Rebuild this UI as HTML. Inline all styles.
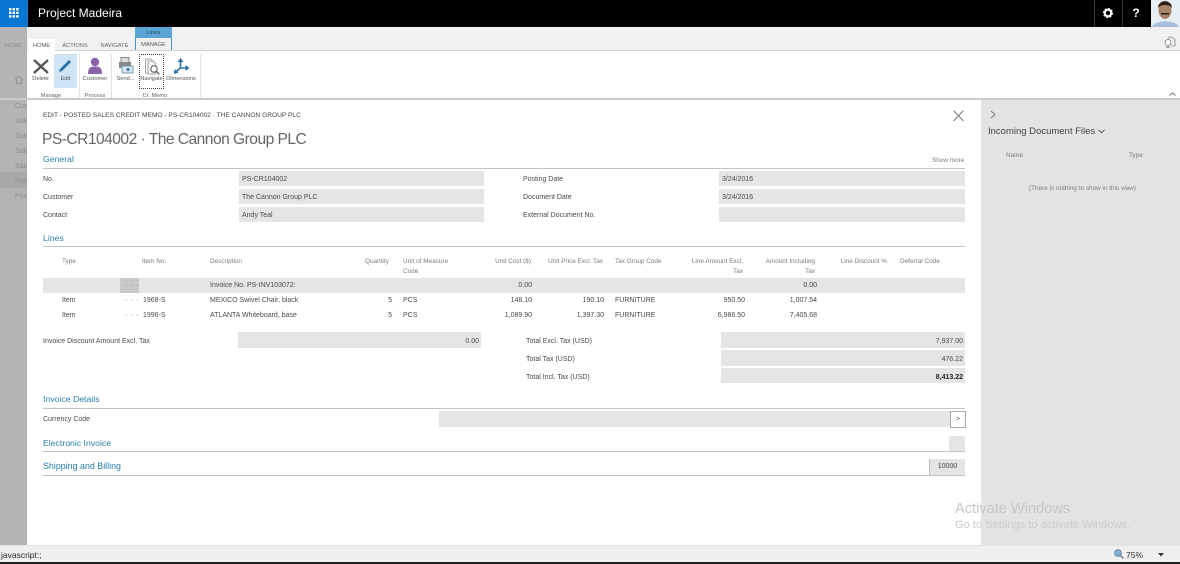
<!DOCTYPE html>
<html><head><meta charset="utf-8"><style>
html,body{margin:0;padding:0;width:1180px;height:564px;overflow:hidden;background:#fff}
body{position:relative;font-family:"Liberation Sans",sans-serif;font-size:7px;color:#4a4a4a}
.a,.t,.r,.b{position:absolute}
.t,.r{white-space:nowrap;line-height:10px}
.r{text-align:right}
.h{color:#7c7c7c;font-size:6.4px}
.f{background:#e5e5e5}
.s{color:#2a7fa8;font-size:8.7px;line-height:12px}
.l{background:#c4c4c4;height:1px;left:43px;width:922px}
.rb{font-size:5.7px;color:#555;text-align:center;position:absolute;line-height:8px;white-space:nowrap}
.d{letter-spacing:.6px;color:#555}
.g{color:#8e8e8e;width:12px;overflow:hidden}
svg{position:absolute;overflow:visible}
</style></head><body>
<!-- left backdrop -->
<div class="a" style="left:0;top:27px;width:27px;height:518px;background:#b4b4b4"></div>
<div class="a" style="left:0;top:172px;width:27px;height:16px;background:#a8a8a8"></div>
<!-- top bar -->
<div class="a" style="left:0;top:0;width:1180px;height:27px;background:#000"></div>
<div class="a" style="left:0;top:0;width:28px;height:27px;background:#0a78d2"></div>
<svg style="left:9px;top:8px" width="10" height="10"><g fill="#fff"><rect x="0" y="0" width="2.4" height="2.4"/><rect x="3.6" y="0" width="2.4" height="2.4"/><rect x="7.2" y="0" width="2.4" height="2.4"/><rect x="0" y="3.6" width="2.4" height="2.4"/><rect x="3.6" y="3.6" width="2.4" height="2.4"/><rect x="7.2" y="3.6" width="2.4" height="2.4"/><rect x="0" y="7.2" width="2.4" height="2.4"/><rect x="3.6" y="7.2" width="2.4" height="2.4"/><rect x="7.2" y="7.2" width="2.4" height="2.4"/></g></svg>
<div class="t" style="left:38px;top:6px;font-size:12px;line-height:15px;color:#fff">Project Madeira</div>
<div class="a" style="left:1094px;top:0;width:1px;height:27px;background:#333"></div>
<div class="a" style="left:1122px;top:0;width:1px;height:27px;background:#333"></div>
<svg style="left:1103px;top:8px" width="10" height="10"><circle cx="5" cy="5" r="3.3" fill="none" stroke="#fff" stroke-width="2.2"/><circle cx="5" cy="5" r="4.4" fill="none" stroke="#fff" stroke-width="1.4" stroke-dasharray="1.7 1.75"/></svg>
<div class="t" style="left:1131px;top:6px;font-size:12px;line-height:14px;font-weight:bold;color:#fff;width:10px;text-align:center">?</div>
<svg style="left:1151px;top:0" width="29" height="27"><rect width="29" height="27" fill="#e8eff4"/><path d="M1 27 C3 22 9 22 14 21 C19 22 26 22 28 27Z" fill="#a8c0dc"/><ellipse cx="14" cy="10" rx="6.5" ry="9" fill="#a98468"/><path d="M7 8 C7 -1 21 -1 21 8 C19 4 9 4 7 8Z" fill="#2a2018"/><rect x="10" y="13" width="8" height="1.5" fill="#2d2019"/></svg>
<!-- ribbon -->
<div class="a" style="left:27px;top:27px;width:1153px;height:24px;background:#f1f1f1"></div>
<div class="a" style="left:27px;top:50px;width:1153px;height:1px;background:#d4d4d4"></div>
<div class="a" style="left:27px;top:51px;width:1153px;height:47px;background:#fff"></div>
<div class="a" style="left:0;top:98px;width:1180px;height:2px;background:#cbcbcb"></div>
<div class="a" style="left:28px;top:39px;width:27px;height:12px;background:#fff"></div>
<div class="a" style="left:135px;top:27px;width:37px;height:11px;background:#5aa5d5"></div>
<div class="a" style="left:135px;top:38px;width:35px;height:12px;background:#f1f1f1;border-left:1px solid #4a90bc;border-right:1px solid #4a90bc"></div>
<div class="rb" style="left:135px;top:29px;width:37px;color:#2f4a5a">Lines</div>
<div class="rb" style="left:0;top:42px;width:27px;color:#8e8e8e">HOME</div>
<div class="rb" style="left:28px;top:42px;width:27px">HOME</div>
<div class="rb" style="left:60px;top:42px;width:30px;color:#666">ACTIONS</div>
<div class="rb" style="left:98px;top:42px;width:33px;color:#666">NAVIGATE</div>
<div class="rb" style="left:135px;top:41px;width:37px">MANAGE</div>
<div class="a" style="left:54px;top:54px;width:23px;height:34px;background:#cfe5f5"></div>
<svg style="left:33px;top:59px" width="16" height="16"><path d="M1 1 L15 14 M15 1 L1 14" stroke="#555" stroke-width="2.4" fill="none"/></svg>
<svg style="left:58px;top:59px" width="14" height="14"><path d="M1 13 L2 10 L11 1 L13 3 L4 12Z" fill="#2a6fa8"/></svg>
<svg style="left:87px;top:57px" width="16" height="17"><circle cx="8" cy="5" r="4.2" fill="#8b63ab"/><path d="M1 17 C1 10 4 9.5 8 9.5 C12 9.5 15 10 15 17Z" fill="#8b63ab"/></svg>
<svg style="left:117px;top:57px" width="16" height="16"><rect x="4" y="0.5" width="8" height="5" fill="#ddd" stroke="#888"/><rect x="2" y="5" width="12" height="6" fill="#888"/><rect x="5" y="9" width="11" height="7" fill="#d6e6f2" stroke="#5f8bab" stroke-width=".8"/><circle cx="11" cy="12.5" r="1.6" fill="#3f7fae"/></svg>
<div class="a" style="left:139px;top:54px;width:23px;height:33px;border:1px dotted #444"></div>
<svg style="left:144px;top:58px" width="16" height="17"><path d="M1.5 1 H7 L10 4 V15 H1.5Z" fill="#f4f4f4" stroke="#aaa"/><path d="M4 3 H9 L12 6 V16 H4Z" fill="#f4f4f4" stroke="#aaa"/><circle cx="10" cy="11" r="3.2" fill="#fff" stroke="#555"/><path d="M12.3 13.3 L15.5 16.5" stroke="#555" stroke-width="1.2"/></svg>
<svg style="left:174px;top:58px" width="16" height="16"><path d="M6.5 2 V10 L1.5 14 M6.5 10 H14" fill="none" stroke="#2a6fa8" stroke-width="1.6"/><path d="M6.5 0 L9.5 4 H3.5Z M15.5 10 L11.5 7 V13Z M0 16 L0.5 11 L4.5 14.5Z" fill="#2a6fa8"/></svg>
<div class="rb" style="left:28px;top:75px;width:25px">Delete</div>
<div class="rb" style="left:54px;top:75px;width:23px">Edit</div>
<div class="rb" style="left:80px;top:75px;width:30px">Customer</div>
<div class="rb" style="left:113px;top:75px;width:25px">Send...</div>
<div class="rb" style="left:139px;top:75px;width:25px">Navigate</div>
<div class="rb" style="left:165px;top:75px;width:32px">Dimensions</div>
<div class="rb" style="left:30px;top:92px;width:42px;color:#666">Manage</div>
<div class="rb" style="left:80px;top:92px;width:30px;color:#666">Process</div>
<div class="rb" style="left:135px;top:92px;width:40px;color:#666">Cr. Memo</div>
<div class="a" style="left:79px;top:54px;width:1px;height:44px;background:#e4e4e4"></div>
<div class="a" style="left:111px;top:54px;width:1px;height:44px;background:#e4e4e4"></div>
<div class="a" style="left:200px;top:54px;width:1px;height:44px;background:#e4e4e4"></div>
<svg style="left:1164px;top:36px" width="12" height="12"><path d="M5 3 V1 H8 L11 3.5 V10 H7" fill="none" stroke="#888" stroke-width=".8"/><circle cx="4" cy="6.5" r="3" fill="#fff" stroke="#777" stroke-width=".8"/><path d="M3 10 V11.5 H5 V10" fill="none" stroke="#777" stroke-width=".8"/></svg>
<svg style="left:1169px;top:92px" width="7" height="4"><path d="M.5 3.5 L3.5 .8 L6.5 3.5" fill="none" stroke="#777"/></svg>
<svg style="left:14px;top:75px" width="10" height="9"><path d="M1 4.5 L5 1 L9 4.5 M2.5 4 V8.5 H7.5 V4" fill="none" stroke="#8a8a8a" stroke-width=".8"/></svg>
<div class="t g" style="left:15px;top:102px">Cust</div>
<div class="t g" style="left:15px;top:117px">Sales</div>
<div class="t g" style="left:15px;top:132px">Sales</div>
<div class="t g" style="left:15px;top:147px">Sales</div>
<div class="t g" style="left:15px;top:162px">Sales</div>
<div class="t g" style="left:15px;top:177px">Post</div>
<div class="t g" style="left:15px;top:192px">Post</div>
<!-- right panel -->
<div class="a" style="left:981px;top:100px;width:199px;height:445px;background:#e3e3e3"></div>
<svg style="left:990px;top:110px" width="6" height="9"><path d="M1 1 L5 4.5 L1 8" fill="none" stroke="#777"/></svg>
<div class="t" style="left:988px;top:126px;font-size:9.5px;line-height:12px;color:#444">Incoming Document Files</div>
<svg style="left:1098px;top:129px" width="7" height="5"><path d="M.5 .8 L3.5 3.8 L6.5 .8" fill="none" stroke="#555"/></svg>
<div class="t h" style="left:1006px;top:151px">Name</div>
<div class="t h" style="left:1129px;top:151px">Type</div>
<div class="t h" style="left:1029px;top:184px">(There is nothing to show in this view)</div>
<!-- header -->
<div class="t" style="left:43px;top:111px;font-size:6.6px;color:#444">EDIT - POSTED SALES CREDIT MEMO - PS-CR104002 · THE CANNON GROUP PLC</div>
<div class="t" style="left:42px;top:130px;font-size:15.6px;line-height:20px;letter-spacing:-.53px;color:#666">PS-CR104002 · The Cannon Group PLC</div>
<svg style="left:953px;top:110px" width="11" height="12"><path d="M.5 .5 L10.5 11 M10.5 .5 L.5 11" stroke="#777" fill="none"/></svg>
<div class="t s" style="left:43px;top:153px">General</div>
<div class="t h" style="left:932px;top:156px">Show more</div>
<div class="a l" style="top:168px"></div>
<div class="t" style="left:43px;top:175px">No.</div>
<div class="t" style="left:43px;top:193px">Customer</div>
<div class="t" style="left:43px;top:211px">Contact</div>
<div class="a f" style="left:239px;top:171px;width:245px;height:15px"></div>
<div class="a f" style="left:239px;top:189px;width:245px;height:15px"></div>
<div class="a f" style="left:239px;top:207px;width:245px;height:15px"></div>
<div class="t" style="left:242px;top:175px">PS-CR104002</div>
<div class="t" style="left:242px;top:193px">The Cannon Group PLC</div>
<div class="t" style="left:242px;top:211px">Andy Teal</div>
<div class="t" style="left:523px;top:175px">Posting Date</div>
<div class="t" style="left:523px;top:193px">Document Date</div>
<div class="t" style="left:523px;top:211px">External Document No.</div>
<div class="a f" style="left:719px;top:171px;width:246px;height:15px"></div>
<div class="a f" style="left:719px;top:189px;width:246px;height:15px"></div>
<div class="a f" style="left:719px;top:207px;width:246px;height:15px"></div>
<div class="t" style="left:722px;top:175px">3/24/2016</div>
<div class="t" style="left:722px;top:193px">3/24/2016</div>
<!-- lines -->
<div class="t s" style="left:43px;top:232px">Lines</div>
<div class="a l" style="top:246px"></div>
<div class="t h" style="left:62px;top:257px">Type</div>
<div class="t h" style="left:142px;top:257px">Item No.</div>
<div class="t h" style="left:210px;top:257px">Description</div>
<div class="t h" style="left:365px;top:257px">Quantity</div>
<div class="t h" style="left:403px;top:257px">Unit of Measure<br>Code</div>
<div class="r h" style="right:649px;top:257px">Unit Cost ($)</div>
<div class="r h" style="right:577px;top:257px">Unit Price Excl. Tax</div>
<div class="t h" style="left:615px;top:257px">Tax Group Code</div>
<div class="r h" style="right:437px;top:257px">Line Amount Excl.<br>Tax</div>
<div class="r h" style="right:365px;top:257px">Amount Including<br>Tax</div>
<div class="r h" style="right:293px;top:257px">Line Discount %</div>
<div class="t h" style="left:900px;top:257px">Deferral Code</div>
<div class="a f" style="left:43px;top:278px;width:922px;height:15px"></div>
<div class="a" style="left:120px;top:278px;width:19px;height:15px;background:#c9c9c9"></div>
<div class="t d" style="left:125px;top:281px">· · ·</div>
<div class="t" style="left:210px;top:281px">Invoice No. PS-INV103072:</div>
<div class="r" style="right:648px;top:281px">0.00</div>
<div class="r" style="right:363px;top:281px">0.00</div>
<div class="t" style="left:62px;top:296px">Item</div>
<div class="t d" style="left:125px;top:296px">· · ·</div>
<div class="t" style="left:143px;top:296px">1968-S</div>
<div class="t" style="left:210px;top:296px">MEXICO Swivel Chair, black</div>
<div class="r" style="right:788px;top:296px">5</div>
<div class="t" style="left:403px;top:296px">PCS</div>
<div class="r" style="right:648px;top:296px">148.10</div>
<div class="r" style="right:576px;top:296px">190.10</div>
<div class="t" style="left:615px;top:296px">FURNITURE</div>
<div class="r" style="right:435px;top:296px">950.50</div>
<div class="r" style="right:363px;top:296px">1,007.54</div>
<div class="t" style="left:62px;top:311px">Item</div>
<div class="t d" style="left:125px;top:311px">· · ·</div>
<div class="t" style="left:143px;top:311px">1996-S</div>
<div class="t" style="left:210px;top:311px">ATLANTA Whiteboard, base</div>
<div class="r" style="right:788px;top:311px">5</div>
<div class="t" style="left:403px;top:311px">PCS</div>
<div class="r" style="right:648px;top:311px">1,089.90</div>
<div class="r" style="right:576px;top:311px">1,397.30</div>
<div class="t" style="left:615px;top:311px">FURNITURE</div>
<div class="r" style="right:435px;top:311px">6,986.50</div>
<div class="r" style="right:363px;top:311px">7,405.68</div>
<!-- totals -->
<div class="t" style="left:43px;top:337px">Invoice Discount Amount Excl. Tax</div>
<div class="a f" style="left:238px;top:332px;width:243px;height:16px"></div>
<div class="r" style="right:701px;top:337px">0.00</div>
<div class="t" style="left:526px;top:337px">Total Excl. Tax (USD)</div>
<div class="t" style="left:526px;top:355px">Total Tax (USD)</div>
<div class="t" style="left:526px;top:373px">Total Incl. Tax (USD)</div>
<div class="a f" style="left:721px;top:332px;width:244px;height:16px"></div>
<div class="a f" style="left:721px;top:350px;width:244px;height:16px"></div>
<div class="a f" style="left:721px;top:368px;width:244px;height:15px"></div>
<div class="r" style="right:217px;top:337px">7,937.00</div>
<div class="r" style="right:217px;top:355px">476.22</div>
<div class="r" style="right:217px;top:373px;font-weight:bold;color:#222">8,413.22</div>
<!-- sections -->
<div class="t s" style="left:43px;top:393px">Invoice Details</div>
<div class="a l" style="top:408px"></div>
<div class="t" style="left:43px;top:415px">Currency Code</div>
<div class="a f" style="left:439px;top:411px;width:511px;height:16px"></div>
<div class="a" style="left:950px;top:411px;width:14px;height:15px;border:1px solid #aaa;background:#fff;text-align:center;line-height:15px;font-size:7px;color:#555">&gt;</div>
<div class="t s" style="left:43px;top:437px">Electronic Invoice</div>
<div class="a l" style="top:451px"></div>
<div class="a f" style="left:949px;top:436px;width:16px;height:15px"></div>
<div class="t s" style="left:43px;top:460px;font-size:8.9px">Shipping and Billing</div>
<div class="a l" style="top:475px"></div>
<div class="a f" style="left:929px;top:459px;width:36px;height:16px;border-left:1px solid #bbb;box-sizing:border-box;text-align:center;line-height:16px;color:#444">10000</div>
<!-- watermark -->
<div class="t" style="left:955px;top:501px;font-size:14.6px;line-height:16px;color:#c6c6c6">Activate Windows</div>
<div class="t" style="left:955px;top:519px;font-size:11.1px;line-height:12px;color:#cbcbcb">Go to Settings to activate Windows.</div>
<!-- status bar -->
<div class="a" style="left:0;top:545px;width:1180px;height:17px;background:#f0f0f0;border-top:1px solid #e2e2e2;box-sizing:border-box"></div>
<div class="a" style="left:0;top:562px;width:1180px;height:2px;background:#222"></div>
<div class="t" style="left:1px;top:550px;font-size:8.5px;color:#222">javascript:;</div>
<svg style="left:1114px;top:549px" width="10" height="10"><circle cx="4" cy="4" r="3.4" fill="#7fb0d8" stroke="#4a7ca6" stroke-width=".8"/><path d="M6.5 6.5 L9.5 9.5" stroke="#777" stroke-width="1.4"/></svg>
<div class="t" style="left:1126px;top:550px;font-size:8.5px;color:#333">75%</div>
<svg style="left:1158px;top:553px" width="6" height="4"><path d="M0 0 H6 L3 3.5Z" fill="#333"/></svg>
</body></html>
